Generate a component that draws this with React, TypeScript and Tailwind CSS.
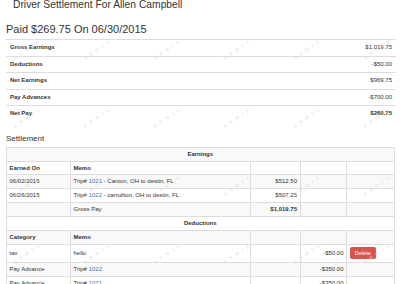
const summary = [
  { label: "Gross Earnings", value: "$1,019.75" },
  { label: "Deductions", value: "-$50.00" },
  { label: "Net Earnings", value: "$969.75" },
  { label: "Pay Advances", value: "-$700.00" },
  { label: "Net Pay", value: "$269.75", strong: true },
];

// faint "admin" watermark tiled over the page
const marks: { x: number; y: number }[] = [];
for (const y of [-11, 57, 125, 193, 261]) {
  for (const x of [15, 85, 155, 225, 295, 365]) {
    marks.push({ x: x + 13, y: y - 8 });
  }
}

function Trip({ id, route }: { id: string; route?: string }) {
  return (
    <>
      Trip# <span className="text-[#337ab7]">{id}</span>
      {route ? ` - ${route}` : ""}
    </>
  );
}

const cell = "border border-[#ddd] px-[2.5px] py-0 align-middle";

export default function App() {
  return (
    <div className="relative h-[284px] w-[400px] overflow-hidden bg-white font-['Liberation_Sans',Arial,sans-serif] text-[#333]">
      <h1 className="pl-[13px] text-[10.3px] leading-[10px] font-normal">
        Driver Settlement For Allen Campbell
      </h1>

      <div className="px-[6px]">
        <h2 className="mt-[13px] text-[11px] leading-[12px] font-normal">
          Paid $269.75 On 06/30/2015
        </h2>

        <div className="mt-[4px] w-[390px]">
          {summary.map((row) => (
            <div
              key={row.label}
              className="flex h-[16.5px] items-center justify-between border-t border-[#ddd] px-[4px] text-[6px]"
            >
              <span className="font-bold">{row.label}</span>
              <span className={row.strong ? "font-bold" : ""}>{row.value}</span>
            </div>
          ))}
        </div>

        <h3 className="mt-[12px] text-[8px] leading-[10px] font-normal">Settlement</h3>

        <table className="mt-[3.6px] w-[387.5px] table-fixed border-collapse text-[6px] leading-[7px]">
          <colgroup>
            <col className="w-[64px]" />
            <col className="w-[179.5px]" />
            <col className="w-[50px]" />
            <col className="w-[46.5px]" />
            <col className="w-[47.5px]" />
          </colgroup>
          <tbody>
            <tr className="h-[14.4px] bg-[#f9f9f9]">
              <td colSpan={5} className={`${cell} text-center font-bold`}>
                Earnings
              </td>
            </tr>
            <tr className="h-[12.6px] font-bold">
              <td className={cell}>Earned On</td>
              <td className={cell}>Memo</td>
              <td className={cell}></td>
              <td className={cell}></td>
              <td className={cell}></td>
            </tr>
            <tr className="h-[14px] bg-[#f9f9f9]">
              <td className={cell}>06/02/2015</td>
              <td className={cell}>
                <Trip id="1021" route="Canton, OH to destin, FL" />
              </td>
              <td className={`${cell} text-right`}>$512.50</td>
              <td className={cell}></td>
              <td className={cell}></td>
            </tr>
            <tr className="h-[14px]">
              <td className={cell}>06/26/2015</td>
              <td className={cell}>
                <Trip id="1022" route="carrollton, OH to destin, FL" />
              </td>
              <td className={`${cell} text-right`}>$507.25</td>
              <td className={cell}></td>
              <td className={cell}></td>
            </tr>
            <tr className="h-[13.8px] bg-[#f9f9f9]">
              <td className={cell}></td>
              <td className={cell}>Gross Pay</td>
              <td className={`${cell} text-right font-bold`}>$1,019.75</td>
              <td className={cell}></td>
              <td className={cell}></td>
            </tr>
            <tr className="h-[14px]">
              <td colSpan={5} className={`${cell} text-center font-bold`}>
                Deductions
              </td>
            </tr>
            <tr className="h-[14px] bg-[#f9f9f9] font-bold">
              <td className={cell}>Category</td>
              <td className={cell}>Memo</td>
              <td className={cell}></td>
              <td className={cell}></td>
              <td className={cell}></td>
            </tr>
            <tr className="h-[17.7px]">
              <td className={cell}>tax</td>
              <td className={cell}>hello</td>
              <td className={cell}></td>
              <td className={`${cell} text-right`}>-$50.00</td>
              <td className={cell}>
                <span className="flex h-[12.3px] w-[26.6px] items-center justify-center rounded-[2px] bg-[#d9534f] text-[5.5px] text-white">
                  Delete
                </span>
              </td>
            </tr>
            <tr className="h-[14.3px] bg-[#f9f9f9]">
              <td className={cell}>Pay Advance</td>
              <td className={cell}>
                <Trip id="1022" />
              </td>
              <td className={cell}></td>
              <td className={`${cell} text-right`}>-$350.00</td>
              <td className={cell}></td>
            </tr>
            <tr className="h-[14px]">
              <td className={cell}>Pay Advance</td>
              <td className={cell}>
                <Trip id="1021" />
              </td>
              <td className={cell}></td>
              <td className={`${cell} text-right`}>-$350.00</td>
              <td className={cell}></td>
            </tr>
          </tbody>
        </table>
      </div>

      <div className="pointer-events-none absolute inset-0" aria-hidden="true">
        {marks.map((m, i) => (
          <span
            key={i}
            className="absolute -translate-x-1/2 -translate-y-1/2 -rotate-[34deg] text-[5px] leading-none tracking-[4px] whitespace-nowrap text-[#dadada]"
            style={{ left: m.x, top: m.y }}
          >
            admin
          </span>
        ))}
      </div>
    </div>
  );
}
